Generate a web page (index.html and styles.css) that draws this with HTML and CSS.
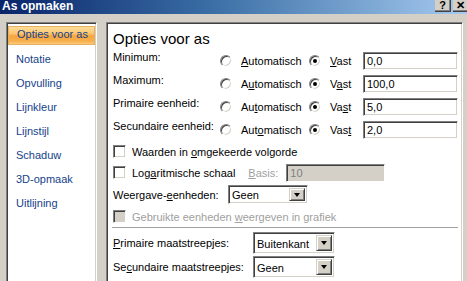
FILE: index.html
```html
<!DOCTYPE html>
<html lang="nl">
<head>
  <meta charset="UTF-8">
  <title>As opmaken</title>
  <link rel="stylesheet" href="styles.css">
</head>
<body>
  <div class="titlebar">
    <span class="title">As opmaken</span>
    <div class="caption-buttons">
      <span class="cap-btn">?</span>
      <span class="cap-btn">✕</span>
    </div>
  </div>

  <div class="dialog">
    <ul class="nav">
      <li class="selected">Opties voor as</li>
      <li>Notatie</li>
      <li>Opvulling</li>
      <li>Lijnkleur</li>
      <li>Lijnstijl</li>
      <li>Schaduw</li>
      <li>3D-opmaak</li>
      <li>Uitlijning</li>
    </ul>

    <div class="panel">
      <h2>Opties voor as</h2>

      <div class="axis-row">
        <span class="label">Minimum:</span>
        <span class="radio"></span><span class="opt-auto"><u>A</u>utomatisch</span>
        <span class="radio checked"></span><span class="opt-fixed"><u>V</u>ast</span>
        <span class="textbox">0,0</span>
      </div>
      <div class="axis-row">
        <span class="label">Maximum:</span>
        <span class="radio"></span><span class="opt-auto">A<u>u</u>tomatisch</span>
        <span class="radio checked"></span><span class="opt-fixed">V<u>a</u>st</span>
        <span class="textbox">100,0</span>
      </div>
      <div class="axis-row">
        <span class="label">Primaire eenheid:</span>
        <span class="radio"></span><span class="opt-auto">Au<u>t</u>omatisch</span>
        <span class="radio checked"></span><span class="opt-fixed">Va<u>s</u>t</span>
        <span class="textbox">5,0</span>
      </div>
      <div class="axis-row">
        <span class="label">Secundaire eenheid:</span>
        <span class="radio"></span><span class="opt-auto">Aut<u>o</u>matisch</span>
        <span class="radio checked"></span><span class="opt-fixed">Vas<u>t</u></span>
        <span class="textbox">2,0</span>
      </div>

      <div class="check-row">
        <span class="checkbox"></span>
        <span>Waarden in <u>o</u>mgekeerde volgorde</span>
      </div>
      <div class="check-row">
        <span class="checkbox"></span>
        <span>Log<u>a</u>ritmische schaal</span>
        <span class="basis-label disabled"><u>B</u>asis:</span>
        <span class="textbox basis-box">10</span>
      </div>

      <div class="combo-row units-row">
        <span class="units-label">Weergave-<u>e</u>enheden:</span>
        <span class="combo units-combo">
          <span class="combo-value">Geen</span>
          <span class="combo-btn"><span class="arrow"></span></span>
        </span>
      </div>

      <div class="check-row disabled">
        <span class="checkbox"></span>
        <span>Gebruikte eenheden <u>w</u>eergeven in grafiek</span>
      </div>

      <hr class="separator">

      <div class="combo-row tick-row">
        <span class="tick-label"><u>P</u>rimaire maatstreepjes:</span>
        <span class="combo tick-combo">
          <span class="combo-value">Buitenkant</span>
          <span class="combo-btn"><span class="arrow"></span></span>
        </span>
      </div>
      <div class="combo-row tick-row">
        <span class="tick-label">Se<u>c</u>undaire maatstreepjes:</span>
        <span class="combo tick-combo">
          <span class="combo-value">Geen</span>
          <span class="combo-btn"><span class="arrow"></span></span>
        </span>
      </div>
    </div>
  </div>
</body>
</html>
```

FILE: styles.css
```css
body {
  margin: 0;
  width: 467px;
  height: 281px;
  overflow: hidden;
  background-color: #d4d0c8;
  font-family: "Liberation Sans", Arial, sans-serif;
  font-size: 11px;
  color: #000;
}

/* title bar */
.titlebar {
  height: 14px;
  display: flex;
  justify-content: space-between;
  align-items: flex-start;
  background: linear-gradient(to right, #0a246a 0%, #3a6ea5 45%, #a6caf0 100%);
}
.title {
  font-weight: bold;
  font-size: 12px;
  line-height: 12px;
  color: #fff;
  padding-left: 2px;
}
.caption-buttons {
  display: flex;
  gap: 2px;
  margin-right: -2px;
}
.cap-btn {
  box-sizing: border-box;
  width: 16px;
  height: 12px;
  background-color: #d4d0c8;
  border-right: 1px solid #404040;
  border-bottom: 1px solid #404040;
  box-shadow: inset -1px -1px #808080;
  font-weight: bold;
  font-size: 11px;
  line-height: 11px;
  text-align: center;
}

/* dialog body */
.dialog {
  display: flex;
  gap: 9px;
  height: 267px;
  padding: 8px 0 0 6px;
  box-sizing: border-box;
}
.nav {
  width: 91px;
  margin: 0;
  padding: 3px 0 0 0;
  list-style: none;
  box-sizing: border-box;
  background-color: #fff;
  border: 1px solid;
  border-color: #808080 #fff #fff #808080;
  box-shadow: inset 1px 1px #404040, inset -1px -1px #d4d0c8;
  height: 280px;
}
.nav li {
  padding-left: 9px;
  line-height: 24px;
  color: #15428b;
}
.nav li.selected {
  margin: 0 1px;
  height: 19px;
  line-height: 17px;
  background: linear-gradient(#fde1a4 0%, #fbc66e 40%, #f6a540 52%, #f7b04c 80%, #fcd68c 100%);
  box-shadow: inset 0 0 0 1px #e7b05e;
}
.nav li.selected + li {
  margin-top: 2px;
}

.panel {
  width: 357px;
  height: 280px;
  box-sizing: border-box;
  padding: 7px 0 0 6px;
  background-color: #fff;
  border: 1px solid;
  border-color: #808080 #fff #fff #808080;
  box-shadow: inset 1px 1px #404040, inset -1px -1px #d4d0c8;
}
h2 {
  margin: 0 0 2px 0;
  font-size: 15px;
  font-weight: normal;
  line-height: 17px;
}

/* Minimum / Maximum rows */
.axis-row {
  display: flex;
  align-items: center;
  height: 23px;
}
.label {
  width: 107px;
  align-self: flex-start;
  line-height: 17px;
}
.radio {
  position: relative;
  box-sizing: border-box;
  width: 12px;
  height: 12px;
  margin-right: 9px;
  border-radius: 50%;
  background-color: #fff;
  border: 1px solid;
  border-color: #808080 #fff #fff #808080;
  box-shadow: inset 1px 1px #404040, inset -1px -1px #d4d0c8;
}
.radio.checked::after {
  content: "";
  position: absolute;
  left: 3px;
  top: 3px;
  width: 4px;
  height: 4px;
  border-radius: 50%;
  background-color: #000;
}
.opt-auto {
  width: 68px;
}
.opt-fixed {
  width: 33px;
}
.textbox {
  box-sizing: border-box;
  width: 95px;
  height: 18px;
  padding-left: 3px;
  line-height: 16px;
  background-color: #fff;
  border: 1px solid;
  border-color: #808080 #fff #fff #808080;
  box-shadow: inset 1px 1px #404040, inset -1px -1px #d4d0c8;
}

/* checkbox rows */
.check-row {
  display: flex;
  align-items: center;
  height: 21px;
}
.checkbox {
  box-sizing: border-box;
  width: 13px;
  height: 13px;
  margin-right: 6px;
  background-color: #fff;
  border: 1px solid;
  border-color: #808080 #fff #fff #808080;
  box-shadow: inset 1px 1px #404040, inset -1px -1px #d4d0c8;
}
.disabled {
  color: #a0a0a0;
}
.check-row.disabled .checkbox {
  background-color: #d4d0c8;
}
.basis-label {
  margin-left: 13px;
  width: 38px;
}
.basis-box {
  width: 99px;
  background-color: #d4d0c8;
  color: #808080;
}

/* dropdowns */
.combo-row {
  display: flex;
  align-items: center;
}
.units-row {
  height: 23px;
}
.units-label {
  width: 115px;
}
.tick-row {
  height: 24px;
}
.tick-label {
  width: 140px;
}
.combo {
  box-sizing: border-box;
  display: flex;
  height: 19px;
  padding: 2px;
  background-color: #fff;
  border: 1px solid;
  border-color: #808080 #fff #fff #808080;
  box-shadow: inset 1px 1px #404040, inset -1px -1px #d4d0c8;
}
.units-combo {
  width: 80px;
}
.tick-combo {
  width: 82px;
  height: 22px;
}
.combo-value {
  flex: 1;
  padding-left: 1px;
  line-height: 15px;
}
.tick-combo .combo-value {
  line-height: 18px;
}
.combo-btn {
  box-sizing: border-box;
  width: 16px;
  display: flex;
  align-items: center;
  justify-content: center;
  background-color: #d4d0c8;
  border: 1px solid;
  border-color: #d4d0c8 #404040 #404040 #d4d0c8;
  box-shadow: inset 1px 1px #fff, inset -1px -1px #808080;
}
.arrow {
  width: 0;
  height: 0;
  border-left: 3px solid transparent;
  border-right: 3px solid transparent;
  border-top: 4px solid #000;
}

.separator {
  margin: 0 4px 2px -1px;
  border: none;
  border-top: 1px solid #a0a0a0;
  border-bottom: 1px solid #fff;
}
```
